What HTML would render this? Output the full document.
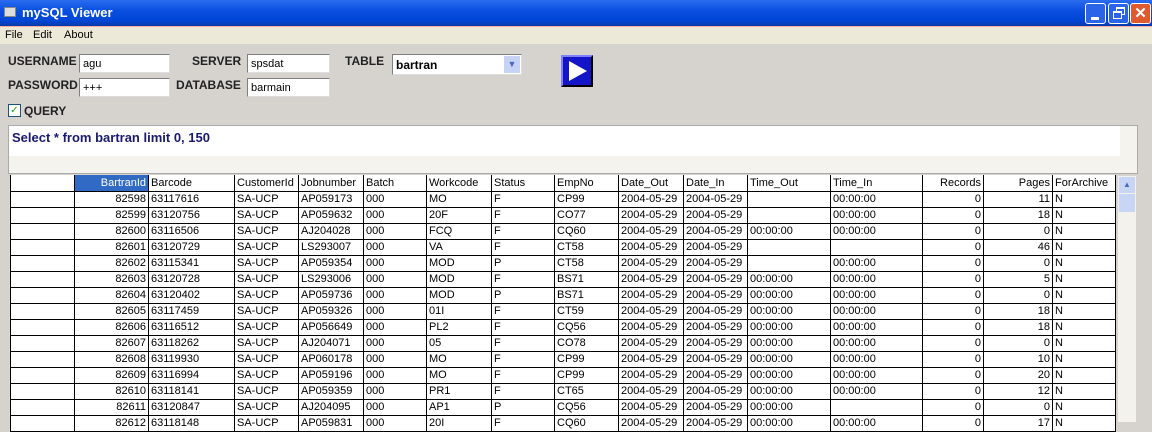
<!DOCTYPE html>
<html><head><style>
*{margin:0;padding:0;box-sizing:border-box}
body{width:1152px;height:422px;overflow:hidden;background:#d6d3ce;font-family:"Liberation Sans",sans-serif;font-size:11px;position:relative}
.a{position:absolute}
.title{left:0;top:0;width:1152px;height:26px;background:linear-gradient(#2a6cf0,#0a4fe0 40%,#0046d5 80%,#0a3aa8);color:#fff;font-weight:bold;font-size:13px}
.menu{left:0;top:26px;width:1152px;height:18px;background:#ece9d8;border-top:1px solid #f2b0a0}
.lbl{font-weight:bold;font-size:12px;color:#222}
.inp{background:#fff;border:1px solid #7f7f7f;border-right-color:#ddd;border-bottom-color:#ddd;font-size:11px;padding:3px 0 0 3px}
table{border-collapse:collapse;table-layout:fixed;position:absolute;left:10px;top:175px;background:#fff}
td{border:1px solid #000;height:16px;padding:0 2px;white-space:nowrap;overflow:hidden;font-size:11px;line-height:14px}
tr.h td{border-top:none}
td.r{text-align:right}
td.f{border-left:none}
</style></head><body>
<div class="a title"><span class="a" style="left:4px;top:7px;width:12px;height:10px;background:#ddd;border:1px solid #888"></span><span class="a" style="left:22px;top:5px">mySQL Viewer</span>
<div class="a" style="left:1085px;top:3px;width:21px;height:21px;background:#2b64e8;border:1px solid #fff;border-radius:3px"><div class="a" style="left:5px;top:13px;width:8px;height:3px;background:#fff"></div></div>
<div class="a" style="left:1108px;top:3px;width:21px;height:21px;background:#2b64e8;border:1px solid #fff;border-radius:3px"><div class="a" style="left:7px;top:3px;width:9px;height:8px;border:1px solid #fff;border-top-width:2px"></div><div class="a" style="left:4px;top:7px;width:9px;height:8px;border:1px solid #fff;border-top-width:2px;background:#2b64e8"></div></div>
<div class="a" style="left:1130px;top:3px;width:21px;height:21px;background:#e05a30;border:1px solid #fff;border-radius:3px;font-size:15px;text-align:center;line-height:19px">✕</div>
</div>
<div class="a menu"><span class="a" style="left:5px;top:2px">File</span><span class="a" style="left:33px;top:2px">Edit</span><span class="a" style="left:64px;top:2px">About</span></div>

<div class="a lbl" style="left:8px;top:54px">USERNAME</div>
<div class="a lbl" style="left:8px;top:78px">PASSWORD</div>
<div class="a lbl" style="left:192px;top:54px">SERVER</div>
<div class="a lbl" style="left:176px;top:78px">DATABASE</div>
<div class="a lbl" style="left:345px;top:54px">TABLE</div>
<div class="a inp" style="left:79px;top:54px;width:91px;height:19px">agu</div>
<div class="a inp" style="left:79px;top:78px;width:91px;height:19px">+++</div>
<div class="a inp" style="left:247px;top:54px;width:83px;height:19px">spsdat</div>
<div class="a inp" style="left:247px;top:78px;width:83px;height:19px">barmain</div>
<div class="a inp" style="left:392px;top:54px;width:130px;height:21px;font-weight:bold;font-size:12px;padding-top:3px">bartran<div class="a" style="right:1px;top:1px;width:16px;height:17px;background:#c6d3f5;color:#4a68c0;font-size:9px;text-align:center;line-height:17px">▼</div></div>
<div class="a" style="left:561px;top:55px;width:32px;height:32px;background:#1414c8;border:2px solid #000;border-top-color:#8080ff;border-left-color:#8080ff"><svg width="28" height="28" style="position:absolute;left:0;top:0"><polygon points="6,4 24,14 6,24" fill="#fff"/></svg></div>

<div class="a" style="left:8px;top:104px;width:13px;height:13px;background:#fff;border:1px solid #1c5180;font-size:10px;line-height:11px;text-align:center;color:#21a121">✓</div>
<div class="a lbl" style="left:24px;top:104px">QUERY</div>

<div class="a" style="left:8px;top:125px;width:1130px;height:49px;background:#fff;border:1px solid #aaa"><div class="a" style="left:3px;top:4px;font-weight:bold;font-size:13px;color:#1a1a70">Select * from bartran limit 0, 150</div>
<div class="a" style="left:0;top:30px;width:1128px;height:17px;background:#f4f3ee"></div>
<div class="a" style="right:0;top:0;width:17px;height:30px;background:#f4f3ee"></div></div>

<table>
<colgroup><col style="width:64px"><col style="width:74px"><col style="width:86px"><col style="width:64px"><col style="width:65px"><col style="width:63px"><col style="width:65px"><col style="width:63px"><col style="width:64px"><col style="width:65px"><col style="width:64px"><col style="width:83px"><col style="width:92px"><col style="width:61px"><col style="width:69px"><col style="width:63px"></colgroup>
<tr class="h"><td></td><td class="r" style="background:#316ac5;color:#fff">BartranId</td><td>Barcode</td><td>CustomerId</td><td>Jobnumber</td><td>Batch</td><td>Workcode</td><td>Status</td><td>EmpNo</td><td>Date_Out</td><td>Date_In</td><td>Time_Out</td><td>Time_In</td><td class="r">Records</td><td class="r">Pages</td><td>ForArchive</td></tr>
<tr><td></td><td class="r" style="border:1px dotted #000">82598</td><td>63117616</td><td>SA-UCP</td><td>AP059173</td><td>000</td><td>MO</td><td>F</td><td>CP99</td><td>2004-05-29</td><td>2004-05-29</td><td></td><td>00:00:00</td><td class="r">0</td><td class="r">11</td><td>N</td></tr>
<tr><td></td><td class="r">82599</td><td>63120756</td><td>SA-UCP</td><td>AP059632</td><td>000</td><td>20F</td><td>F</td><td>CO77</td><td>2004-05-29</td><td>2004-05-29</td><td></td><td>00:00:00</td><td class="r">0</td><td class="r">18</td><td>N</td></tr>
<tr><td></td><td class="r">82600</td><td>63116506</td><td>SA-UCP</td><td>AJ204028</td><td>000</td><td>FCQ</td><td>F</td><td>CQ60</td><td>2004-05-29</td><td>2004-05-29</td><td>00:00:00</td><td>00:00:00</td><td class="r">0</td><td class="r">0</td><td>N</td></tr>
<tr><td></td><td class="r">82601</td><td>63120729</td><td>SA-UCP</td><td>LS293007</td><td>000</td><td>VA</td><td>F</td><td>CT58</td><td>2004-05-29</td><td>2004-05-29</td><td></td><td></td><td class="r">0</td><td class="r">46</td><td>N</td></tr>
<tr><td></td><td class="r">82602</td><td>63115341</td><td>SA-UCP</td><td>AP059354</td><td>000</td><td>MOD</td><td>P</td><td>CT58</td><td>2004-05-29</td><td>2004-05-29</td><td></td><td>00:00:00</td><td class="r">0</td><td class="r">0</td><td>N</td></tr>
<tr><td></td><td class="r">82603</td><td>63120728</td><td>SA-UCP</td><td>LS293006</td><td>000</td><td>MOD</td><td>F</td><td>BS71</td><td>2004-05-29</td><td>2004-05-29</td><td>00:00:00</td><td>00:00:00</td><td class="r">0</td><td class="r">5</td><td>N</td></tr>
<tr><td></td><td class="r">82604</td><td>63120402</td><td>SA-UCP</td><td>AP059736</td><td>000</td><td>MOD</td><td>P</td><td>BS71</td><td>2004-05-29</td><td>2004-05-29</td><td>00:00:00</td><td>00:00:00</td><td class="r">0</td><td class="r">0</td><td>N</td></tr>
<tr><td></td><td class="r">82605</td><td>63117459</td><td>SA-UCP</td><td>AP059326</td><td>000</td><td>01I</td><td>F</td><td>CT59</td><td>2004-05-29</td><td>2004-05-29</td><td>00:00:00</td><td>00:00:00</td><td class="r">0</td><td class="r">18</td><td>N</td></tr>
<tr><td></td><td class="r">82606</td><td>63116512</td><td>SA-UCP</td><td>AP056649</td><td>000</td><td>PL2</td><td>F</td><td>CQ56</td><td>2004-05-29</td><td>2004-05-29</td><td>00:00:00</td><td>00:00:00</td><td class="r">0</td><td class="r">18</td><td>N</td></tr>
<tr><td></td><td class="r">82607</td><td>63118262</td><td>SA-UCP</td><td>AJ204071</td><td>000</td><td>05</td><td>F</td><td>CO78</td><td>2004-05-29</td><td>2004-05-29</td><td>00:00:00</td><td>00:00:00</td><td class="r">0</td><td class="r">0</td><td>N</td></tr>
<tr><td></td><td class="r">82608</td><td>63119930</td><td>SA-UCP</td><td>AP060178</td><td>000</td><td>MO</td><td>F</td><td>CP99</td><td>2004-05-29</td><td>2004-05-29</td><td>00:00:00</td><td>00:00:00</td><td class="r">0</td><td class="r">10</td><td>N</td></tr>
<tr><td></td><td class="r">82609</td><td>63116994</td><td>SA-UCP</td><td>AP059196</td><td>000</td><td>MO</td><td>F</td><td>CP99</td><td>2004-05-29</td><td>2004-05-29</td><td>00:00:00</td><td>00:00:00</td><td class="r">0</td><td class="r">20</td><td>N</td></tr>
<tr><td></td><td class="r">82610</td><td>63118141</td><td>SA-UCP</td><td>AP059359</td><td>000</td><td>PR1</td><td>F</td><td>CT65</td><td>2004-05-29</td><td>2004-05-29</td><td>00:00:00</td><td>00:00:00</td><td class="r">0</td><td class="r">12</td><td>N</td></tr>
<tr><td></td><td class="r">82611</td><td>63120847</td><td>SA-UCP</td><td>AJ204095</td><td>000</td><td>AP1</td><td>P</td><td>CQ56</td><td>2004-05-29</td><td>2004-05-29</td><td>00:00:00</td><td></td><td class="r">0</td><td class="r">0</td><td>N</td></tr>
<tr><td></td><td class="r">82612</td><td>63118148</td><td>SA-UCP</td><td>AP059831</td><td>000</td><td>20I</td><td>F</td><td>CQ60</td><td>2004-05-29</td><td>2004-05-29</td><td>00:00:00</td><td>00:00:00</td><td class="r">0</td><td class="r">17</td><td>N</td></tr>
</table>
<div class="a" style="left:1118px;top:176px;width:18px;height:246px;background:#f3f2ec"><div class="a" style="left:1px;top:1px;width:16px;height:16px;background:#c8d5f5;color:#4a68c0;font-size:8px;text-align:center;line-height:16px">▲</div><div class="a" style="left:1px;top:18px;width:16px;height:18px;background:#c8d5f5"></div></div>
</body></html>
